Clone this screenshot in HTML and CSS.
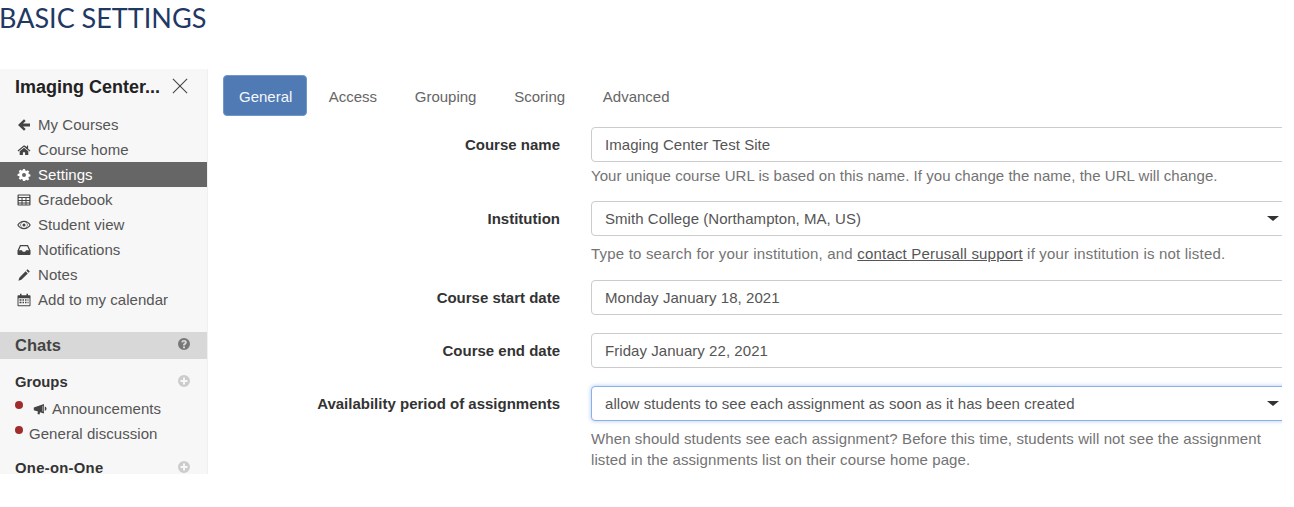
FILE: index.html
```html
<!DOCTYPE html>
<html lang="en">
<head>
<meta charset="utf-8">
<title>Basic settings</title>
<link rel="stylesheet" href="styles.css">
</head>
<body>
<h1 class="page-title">BASIC SETTINGS</h1>
<div class="app">
  <aside class="sidebar">
    <div class="side-head">
      <span class="course-title">Imaging Center...</span>
      <svg class="close" viewBox="0 0 18 18"><path d="M1 1l16 16M17 1L1 17"/></svg>
    </div>
    <nav class="side-nav">
      <a class="nav-item"><svg class="ic" viewBox="0 0 14 14"><path d="M7 1.200l1.700 1.700-2.700 2.700H13v2.800H6l2.700 2.700L7 12.800 1 7z"/></svg>My Courses</a>
      <a class="nav-item"><svg class="ic" viewBox="0 0 14 14"><path d="M7 2.200L.6 7.600l.7.800L7 3.700l5.700 4.700.7-.8-2.300-1.900V2.600H10v1.400zM2.700 8.200V12h3.200V9.200h2.200V12h3.200V8.200L7 4.700z"/></svg>Course home</a>
      <a class="nav-item active"><svg class="ic" viewBox="0 0 14 14"><path fill-rule="evenodd" d="M6 1h2l.4 1.600 1 .4 1.400-.8 1.400 1.400-.8 1.400.4 1 1.600.4v2l-1.600.4-.4 1 .8 1.400-1.400 1.400-1.400-.8-1 .4L8 13H6l-.4-1.600-1-.4-1.400.8-1.400-1.400.8-1.400-.4-1L.6 8V6l1.600-.4.4-1-.8-1.400 1.400-1.400 1.400.8 1-.4zM7 5a2 2 0 100 4 2 2 0 000-4z"/></svg>Settings</a>
      <a class="nav-item"><svg class="ic" viewBox="0 0 14 14"><path fill-rule="evenodd" d="M1.500 1.500h11a1 1 0 011 1v9a1 1 0 01-1 1h-11a1 1 0 01-1-1v-9a1 1 0 011-1zm.2 1v1.500h10.600V2.500zm0 2.500v2h2.800V5zm3.800 0v2h3V5zm4 0v2h2.800V5zM1.700 8v1.500h2.800V8zm3.800 0v1.500h3V8zm4 0v1.500h2.800V8zM1.700 10.500v1h2.800v-1zm3.800 0v1h3v-1zm4 0v1h2.800v-1z"/></svg>Gradebook</a>
      <a class="nav-item"><svg class="ic" viewBox="0 0 14 14"><path fill-rule="evenodd" d="M7 2.800c3 0 5.400 1.800 6.800 4.200C12.400 9.400 10 11.200 7 11.200S1.600 9.400.2 7C1.600 4.600 4 2.800 7 2.800zM7 4a3 3 0 100 6 3 3 0 000-6zM1.500 7c1 1.300 2 2.200 3.100 2.700a4 4 0 010-5.400C3.500 4.800 2.500 5.700 1.500 7zm7.900-2.700a4 4 0 010 5.400c1.100-.5 2.100-1.400 3.100-2.700-1-1.300-2-2.200-3.100-2.700zM7 5.500a1.500 1.500 0 110 3 1.500 1.500 0 010-3z"/></svg>Student view</a>
      <a class="nav-item"><svg class="ic" viewBox="0 0 14 14"><path fill-rule="evenodd" d="M3 2h8l2.500 5.500V11a1 1 0 01-1 1h-11a1 1 0 01-1-1V7.500zm.8 1.200L2 7.300h3l.8 1.400h2.400L9 7.300h3l-1.800-4.100z"/></svg>Notifications</a>
      <a class="nav-item"><svg class="ic" viewBox="0 0 14 14"><path d="M10.600 1.200l2.200 2.200-1.300 1.300-2.200-2.200zM8.600 3.200l2.200 2.200-6.400 6.400-3 .9.900-3z"/></svg>Notes</a>
      <a class="nav-item"><svg class="ic" viewBox="0 0 14 14"><path fill-rule="evenodd" d="M3 .8h1.500v1.400h5V.8H11v1.400h1.800a.7.7 0 01.7.7v9.600a.7.7 0 01-.7.700H1.200a.7.7 0 01-.7-.7V2.900a.7.7 0 01.7-.7H3zM1.500 5.200v7h11v-7zm1 1h2v1.500h-2zm3 0h1.500v1.500H5.500zm2.500 0h1.500v1.500H8zm2.500 0h1v1.500h-1zm-8 2.500h2v1.500h-2zm3 0h1.500v1.500H5.500zm2.500 0h1.500v1.500H8zm2.500 0h1v1.500h-1z"/></svg>Add to my calendar</a>
    </nav>
    <div class="chats-bar">
      <span>Chats</span>
      <svg class="round-ic dark" viewBox="0 0 14 14"><path fill-rule="evenodd" d="M7 1a6 6 0 110 12A6 6 0 017 1zM6 9.500v1.700h2V9.500zM7 3C5.500 3 4.500 3.800 4.300 5.200l1.800.3c.1-.6.400-.9.900-.9s.8.300.8.700c0 .4-.3.600-.7.900-.7.500-1.100 1-1.100 2.100v.3h1.900v-.2c0-.5.200-.7.700-1 .7-.5 1.200-1.100 1.200-2.100C9.800 3.900 8.600 3 7 3z"/></svg>
    </div>
    <div class="chat-group">
      <span>Groups</span>
      <svg class="round-ic" viewBox="0 0 14 14"><path fill-rule="evenodd" d="M7 1a6 6 0 110 12A6 6 0 017 1zM6 3.500V6H3.500v2H6v2.500h2V8h2.500V6H8V3.500z"/></svg>
    </div>
    <div class="chat-item">
      <i class="dot"></i>
      <svg class="ic horn" viewBox="0 0 14 14"><path fill-rule="evenodd" d="M.8 5.500L11 2v9.500L7 10.200 6.600 12.500 4.500 12l.4-2.600L.8 8.200zM9.600 4v5.500l.6.200V3.800zM11.800 4.500c1 .4 1.700 1.200 1.700 2.200s-.7 1.800-1.700 2.200z"/></svg>
      <span>Announcements</span>
    </div>
    <div class="chat-item">
      <i class="dot"></i>
      <span>General discussion</span>
    </div>
    <div class="chat-group last">
      <span>One-on-One</span>
      <svg class="round-ic" viewBox="0 0 14 14"><path fill-rule="evenodd" d="M7 1a6 6 0 110 12A6 6 0 017 1zM6 3.500V6H3.500v2H6v2.500h2V8h2.500V6H8V3.500z"/></svg>
    </div>
  </aside>
  <main class="main">
    <div class="tabs">
      <a class="tab active">General</a>
      <a class="tab">Access</a>
      <a class="tab">Grouping</a>
      <a class="tab">Scoring</a>
      <a class="tab">Advanced</a>
    </div>
    <form class="form">
      <div class="row">
        <div class="label">Course name</div>
        <div class="control">
          <div class="field">Imaging Center Test Site</div>
          <p class="help tight">Your unique course URL is based on this name. If you change the name, the URL will change.</p>
        </div>
      </div>
      <div class="row">
        <div class="label">Institution</div>
        <div class="control">
          <div class="field select">Smith College (Northampton, MA, US)</div>
          <p class="help wide">Type to search for your institution, and <a class="link">contact Perusall support</a> if your institution is not listed.</p>
        </div>
      </div>
      <div class="row">
        <div class="label">Course start date</div>
        <div class="control"><div class="field">Monday January 18, 2021</div></div>
      </div>
      <div class="row">
        <div class="label">Course end date</div>
        <div class="control"><div class="field">Friday January 22, 2021</div></div>
      </div>
      <div class="row">
        <div class="label">Availability period of assignments</div>
        <div class="control">
          <div class="field select focus">allow students to see each assignment as soon as it has been created</div>
          <p class="help">When should students see each assignment? Before this time, students will not see the assignment<br>listed in the assignments list on their course home page.</p>
        </div>
      </div>
    </form>
  </main>
</div>
</body>
</html>
```
FILE: styles.css
```css
* { box-sizing: border-box; }
html, body { margin: 0; padding: 0; background: #fff; }
body { font-family: "Liberation Sans", Arial, sans-serif; font-size: 15px; letter-spacing: .05px; color: #555; height: 507px; overflow: hidden; }

.page-title { margin: 0; height: 69px; padding-top: 1px; margin-left: -1px; font-family: Lato, sans-serif; font-weight: 400; font-size: 27px; letter-spacing: 0; line-height: 34px; color: #1f3864; }

.app { display: flex; width: 1282px; height: 405px; }

.sidebar { flex: 0 0 208px; background: #f7f7f7; border-right: 1px solid #f0f0f0; }
.side-head { display: flex; align-items: center; justify-content: space-between; height: 43px; padding: 0 19px 7px 15px; }
.course-title { font-weight: 700; font-size: 18px; letter-spacing: 0; color: #222; }
.close { width: 16px; height: 16px; margin-top: -3px; fill: none; stroke: #444; stroke-width: 1.200; }
.side-nav { display: flex; flex-direction: column; }
.nav-item { display: flex; align-items: center; height: 25px; padding-left: 17px; color: #555; }
.nav-item.active { background: #666; color: #fff; }
.ic { width: 14px; height: 14px; margin-right: 7px; fill: #444; flex: none; }
.nav-item.active .ic { fill: #fff; }

.chats-bar { display: flex; align-items: center; justify-content: space-between; height: 27px; margin-top: 20px; padding: 0 16px 0 15px; background: #d8d8d8; font-weight: 700; font-size: 16.500px; letter-spacing: 0; color: #444; }
.round-ic { width: 14px; height: 14px; fill: #ccc; flex: none; margin-top: -3px; }
.round-ic.dark { fill: #777; }
.chat-group { display: flex; align-items: center; justify-content: space-between; height: 20px; margin-top: 13px; padding: 0 16px 0 15px; font-weight: 700; font-size: 14.800px; letter-spacing: 0; color: #333; }
.chat-group.last { margin-top: 12px; letter-spacing: .3px; }
.chat-item { display: flex; align-items: center; height: 25px; padding-left: 15px; color: #555; }
.chat-group + .chat-item { margin-top: 4px; }
.dot { width: 8px; height: 8px; border-radius: 50%; background: #a02c2c; margin: -7px 6px 0 0; flex: none; }
.horn { margin: 0 5px 0 4px; }

.main { flex: 1; min-width: 0; padding: 6px 0 0 15px; overflow: hidden; }
.tabs { display: flex; gap: 5.750px; letter-spacing: 0; }
.tab { height: 41px; line-height: 43px; padding: 0 16px; border-radius: 4px; color: #666; }
.tab.active { background: #4f7ab3; color: #f4f7fb; border: 1px solid #6f97c9; line-height: 41px; padding: 0 13.500px 0 15px; }

.form { display: flex; flex-direction: column; margin-top: 11px; }
.row { display: flex; gap: 31px; margin-bottom: 18px; }
.label { flex: 0 0 337px; height: 35px; line-height: 36px; text-align: right; font-weight: 700; letter-spacing: 0; color: #333; }
.control { flex: 0 0 700px; }
.field { position: relative; height: 35px; line-height: 34px; padding-left: 13px; background: #fff; border: 1px solid #ccc; border-radius: 4px; color: #555; }
.select::after { content: ""; position: absolute; left: 675px; top: 14px; border-style: solid; border-width: 5px 6px 0; border-color: #333 transparent transparent; }
.focus { border-color: #8ab2e8; box-shadow: 0 0 4px rgba(102, 155, 230, .55); }
.help { margin: 7px 0 -2px; line-height: 21px; letter-spacing: .1px; color: #737373; }
.help.tight { margin: 3px 0 -3px; letter-spacing: .04px; }
.help.wide { letter-spacing: .19px; }
.link { color: #555; text-decoration: underline; }
```
